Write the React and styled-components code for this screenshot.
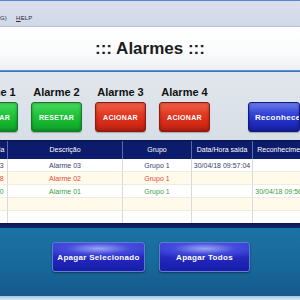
import styled, { createGlobalStyle } from 'styled-components'

const GlobalStyle = createGlobalStyle`
  body {
    margin: 0;
    overflow: hidden;
    font-family: "Liberation Sans", Arial, sans-serif;
  }
`

const Screen = styled.div`
  width: 300px;
  height: 300px;
  overflow: hidden;
  display: flex;
  flex-direction: column;
  background: #ffffff;
`

const TopLine = styled.div`
  height: 1px;
  background: #5b88cc;
`

const MenuBar = styled.div`
  height: 26px;
  box-sizing: border-box;
  display: flex;
  align-items: flex-end;
  gap: 9px;
  padding-bottom: 5px;
  background: linear-gradient(#d9dfec, #d1d8e7);
  border-bottom: 1px solid #b9c2d4;
  font-size: 6px;
  color: #2a2a3a;
`

const MenuItem = styled.span`
  letter-spacing: 0.2px;
  & u {
    text-decoration: underline;
  }
`

const TitleBar = styled.div`
  height: 43px;
  display: flex;
  align-items: center;
  justify-content: center;
  background: linear-gradient(#ffffff 0%, #fafbfc 60%, #eceff3 100%);
`

const Title = styled.h1`
  margin: 0;
  font-size: 17px;
  font-weight: 700;
  color: #1c1c1c;
`

const BlueRule = styled.div`
  height: 2px;
  background: linear-gradient(#6d9ee0, #2f64b8);
`

const AlarmPanel = styled.div`
  height: 68px;
  box-sizing: border-box;
  display: flex;
  align-items: flex-start;
  gap: 13px;
  padding-top: 14px;
  margin-left: -33px;
  background: linear-gradient(#e2e7ed 0%, #d7dee6 100%);
`

const AlarmItem = styled.div`
  width: 51px;
  display: flex;
  flex-direction: column;
  align-items: center;
  gap: 4px;
`

const AlarmLabel = styled.div`
  height: 12px;
  line-height: 12px;
  font-size: 11px;
  font-weight: 700;
  color: #111111;
  white-space: nowrap;
`

const palette = {
  green: {
    bg: 'linear-gradient(#48d85e 0%, #22c63c 40%, #14b22e 75%, #0f9a27 100%)',
    border: '#137a26',
  },
  red: {
    bg: 'linear-gradient(#f0604a 0%, #e23a22 40%, #d22a16 75%, #b31e10 100%)',
    border: '#8c1a0e',
  },
  blue: {
    bg: 'linear-gradient(#6e7ef0 0%, #3848d8 35%, #1f2cc0 70%, #1620a0 100%)',
    border: '#121a80',
  },
}

const GlossButton = styled.button`
  width: ${(p) => p.w || 51}px;
  height: 30px;
  padding: 0;
  border: 1px solid ${(p) => palette[p.tone].border};
  border-radius: 3px;
  background: ${(p) => palette[p.tone].bg};
  box-shadow: inset 0 0 3px rgba(0, 0, 0, 0.35), 0 1px 1px rgba(0, 0, 0, 0.25);
  color: #ffffff;
  font-family: "Liberation Sans", Arial, sans-serif;
  font-size: ${(p) => p.fs || 7}px;
  font-weight: 700;
  letter-spacing: 0.3px;
  white-space: nowrap;
  overflow: hidden;
`

const ReconhecerButton = styled(GlossButton)`
  margin-left: 25px;
  margin-top: 16px;
  text-align: left;
  padding-left: 6px;
`

const TableArea = styled.div`
  height: 83px;
  overflow: hidden;
  background: #fffdf3;
  border-top: 1px solid #08124a;
  box-sizing: border-box;
`

const Grid = styled.div`
  display: grid;
  grid-template-columns: 64px 115px 69px 61px 62px 40px;
  margin-left: -56px;
`

const HeadCell = styled.div`
  height: 18px;
  line-height: 18px;
  background: #0c1b6b;
  color: #ffffff;
  font-size: 7px;
  text-align: center;
  white-space: nowrap;
  overflow: hidden;
  border-right: 1px solid #5a6aa6;
`

const rowColors = {
  navy: '#3a3c6e',
  red: '#e8463a',
  green: '#3b9e3b',
}

const Cell = styled.div`
  height: 13px;
  line-height: 13px;
  font-size: 7px;
  text-align: center;
  white-space: nowrap;
  overflow: hidden;
  color: ${(p) => rowColors[p.tone] || '#333'};
  background: ${(p) => (p.odd ? '#fffaea' : '#ffffff')};
  border-right: 1px solid #dadada;
  border-bottom: 1px solid #f0ece0;
  box-sizing: border-box;
`

const NavyBand = styled.div`
  height: 5px;
  background: linear-gradient(#0a1550, #12286e);
`

const BottomPanel = styled.div`
  height: 68px;
  box-sizing: border-box;
  display: flex;
  align-items: flex-start;
  gap: 14px;
  padding: 14px 0 0 52px;
  background: linear-gradient(#1c72a4 0%, #186a9c 50%, #14598c 100%);
`

const ActionButton = styled.button`
  width: ${(p) => p.w}px;
  height: 30px;
  padding: 0;
  border: 1px solid #5e7fd0;
  border-radius: 3px;
  background: radial-gradient(ellipse 70% 40% at 50% 20%, #9aa4f4 0%, rgba(80, 90, 230, 0.6) 50%, rgba(40, 40, 200, 0) 100%),
    linear-gradient(#3a3ed6 0%, #2428c0 50%, #181ca6 100%);
  box-shadow: 0 1px 2px rgba(0, 0, 0, 0.45);
  color: #ffffff;
  font-family: "Liberation Sans", Arial, sans-serif;
  font-size: 8px;
  font-weight: 700;
  letter-spacing: 0.3px;
  white-space: nowrap;
`

const BottomLine = styled.div`
  height: 4px;
  background: linear-gradient(#9ec4de, #dfeaf2);
`

const alarms = [
  { label: 'Alarme 1', tone: 'green', text: 'RESETAR' },
  { label: 'Alarme 2', tone: 'green', text: 'RESETAR' },
  { label: 'Alarme 3', tone: 'red', text: 'ACIONAR' },
  { label: 'Alarme 4', tone: 'red', text: 'ACIONAR' },
]

const headers = ['Data/Hora entrada', 'Descrição', 'Grupo', 'Data/Hora saida', 'Reconhecimento', '']

const rows = [
  { tone: 'navy', cells: ['30/04/18 09:57:03', 'Alarme 03', 'Grupo 1', '30/04/18 09:57:04', '', ''] },
  { tone: 'red', cells: ['30/04/18 09:57:08', 'Alarme 02', 'Grupo 1', '', '', ''] },
  { tone: 'green', cells: ['30/04/18 09:56:50', 'Alarme 01', 'Grupo 1', '', '30/04/18 09:56:58', ''] },
  { tone: 'navy', cells: ['', '', '', '', '', ''] },
  { tone: 'navy', cells: ['', '', '', '', '', ''] },
]

const App = () => {
  return (
    <Screen>
      <GlobalStyle />
      <TopLine />
      <MenuBar>
        <MenuItem>G)</MenuItem>
        <MenuItem><u>H</u>ELP</MenuItem>
      </MenuBar>
      <TitleBar>
        <Title>::: Alarmes :::</Title>
      </TitleBar>
      <BlueRule />
      <AlarmPanel>
        {alarms.map((a) => (
          <AlarmItem key={a.label}>
            <AlarmLabel>{a.label}</AlarmLabel>
            <GlossButton tone={a.tone}>{a.text}</GlossButton>
          </AlarmItem>
        ))}
        <ReconhecerButton tone="blue" w={70} fs={8}>Reconhecer</ReconhecerButton>
      </AlarmPanel>
      <TableArea>
        <Grid>
          {headers.map((h, i) => (
            <HeadCell key={i}>{h}</HeadCell>
          ))}
          {rows.map((r, ri) =>
            r.cells.map((c, ci) => (
              <Cell key={ri + '-' + ci} tone={r.tone} odd={ri % 2 === 1}>
                {c}
              </Cell>
            ))
          )}
        </Grid>
      </TableArea>
      <NavyBand />
      <BottomPanel>
        <ActionButton w={93}>Apagar Selecionado</ActionButton>
        <ActionButton w={91}>Apagar Todos</ActionButton>
      </BottomPanel>
      <BottomLine />
    </Screen>
  )
}

export default App
